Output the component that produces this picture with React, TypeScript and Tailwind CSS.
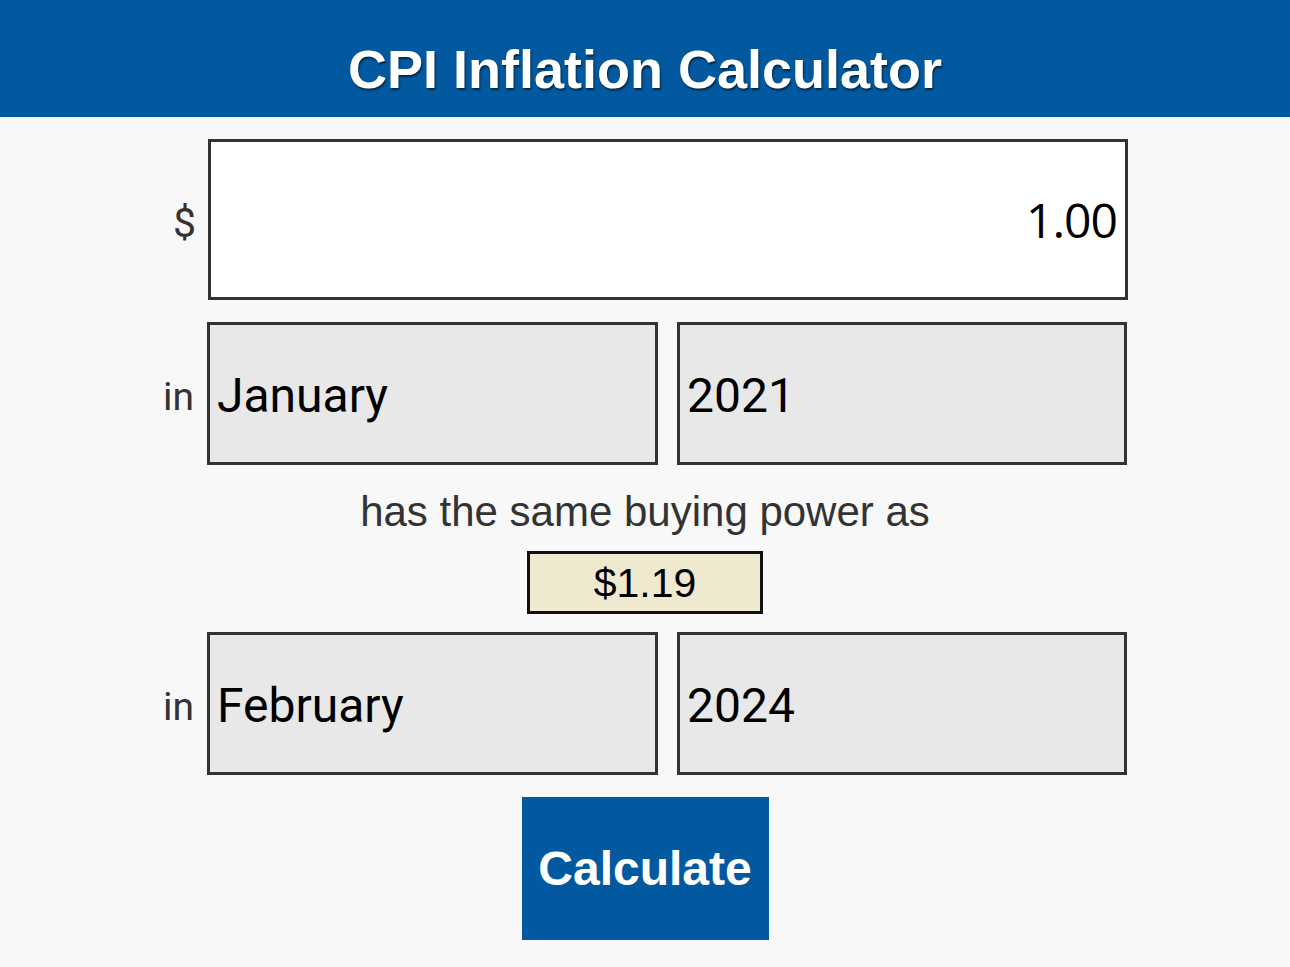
import React from "react";

export default function App() {
  const rows = [
    { month: "January", year: "2021" },
    { month: "February", year: "2024" },
  ];

  const SelectRow = ({ month, year }: { month: string; year: string }) => (
    <div className="flex items-center">
      <span className="w-[46px] pt-[8px] pr-[14px] text-right text-[39px] text-[#333] font-['Roboto',sans-serif]">
        in
      </span>
      <div className="flex w-[920px] gap-[20px]">
        <div className="-ml-px flex h-[143px] w-[451px] items-center border-[3px] border-[#333] bg-[#e8e8e8] pt-[5px] pl-[7px] text-[48px] text-black font-['Roboto',sans-serif]">
          {month}
        </div>
        <div className="-ml-px flex h-[143px] w-[450px] items-center border-[3px] border-[#333] bg-[#e8e8e8] pt-[5px] pl-[7px] text-[48px] text-black font-['Roboto',sans-serif]">
          {year}
        </div>
      </div>
    </div>
  );

  return (
    <div className="min-h-screen bg-[#f8f8f8] font-['Liberation_Sans',sans-serif]">
      <header className="flex h-[117px] items-center justify-center bg-[#03599f] pt-[22px]">
        <h1 className="text-[54px] font-bold text-white [text-shadow:1px_2px_2px_rgba(0,0,0,0.55)]">
          CPI Inflation Calculator
        </h1>
      </header>

      <main className="flex flex-col items-center pt-[22px]">
        <div className="flex items-center">
          <span className="w-[46px] pt-[8px] pr-[12px] text-right text-[41px] text-[#333] font-['Roboto',sans-serif]">
            $
          </span>
          <div className="flex h-[161px] w-[920px] items-center justify-end border-[3px] border-[#333] bg-white pr-[8px] text-[48px] text-black font-['Open_Sans',sans-serif] tracking-[-1px]">
            1.00
          </div>
        </div>

        <div className="mt-[22px]">
          <SelectRow {...rows[0]} />
        </div>

        <p className="mt-[22px] h-[50px] leading-[50px] text-[42px] text-[#333]">
          has the same buying power as
        </p>

        <div className="mt-[14px] flex h-[63px] w-[236px] items-center justify-center border-[3px] border-[#111] bg-[#efe9cf] pt-[2px] text-[41px] text-black">
          $1.19
        </div>

        <div className="mt-[18px]">
          <SelectRow {...rows[1]} />
        </div>

        <button className="mt-[22px] h-[143px] w-[247px] bg-[#03599f] text-[48px] font-bold text-white">
          Calculate
        </button>
      </main>
    </div>
  );
}
